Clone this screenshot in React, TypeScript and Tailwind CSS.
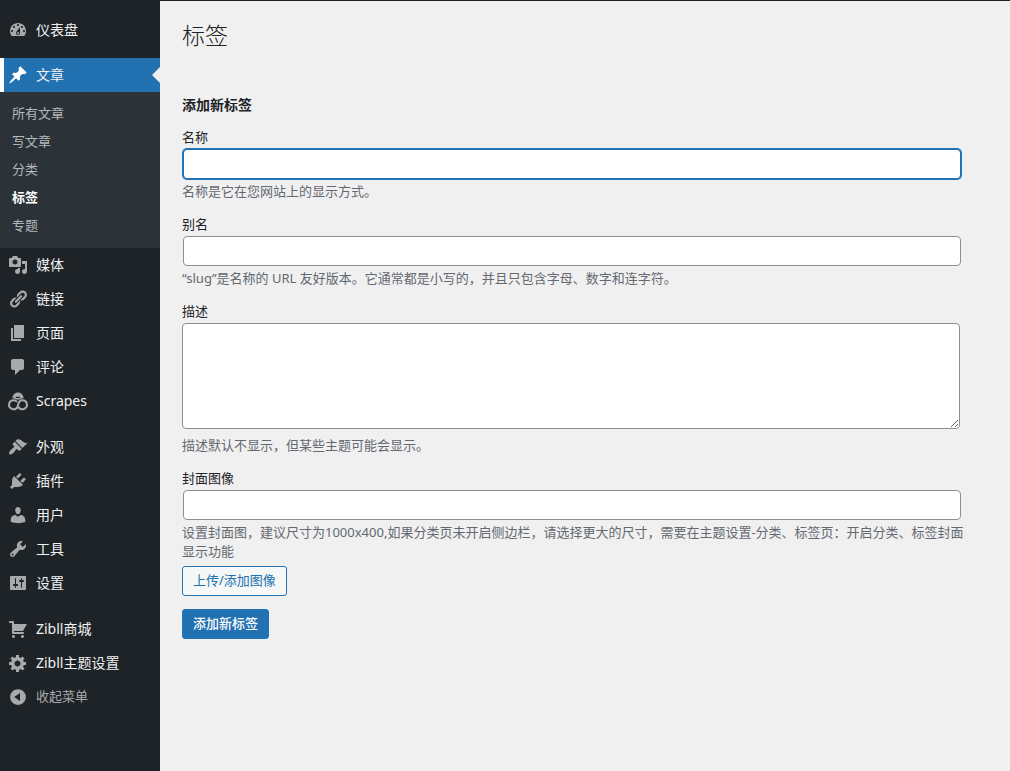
import { Fragment } from 'react';
import type { ReactNode } from 'react';
import clsx from 'clsx';

interface MenuItem {
  label: string;
  icon: string;
  current?: boolean;
  children?: { label: string; current?: boolean }[];
}

// Dashicons, 20 × 20 grid
const ICONS: Record<string, string> = {
  dashboard: 'M3.76 16h12.48c1.1-1.37 1.76-3.11 1.76-5 0-4.42-3.58-8-8-8s-8 3.58-8 8c0 1.89.66 3.63 1.76 5zM10 4c.55 0 1 .45 1 1s-.45 1-1 1-1-.45-1-1 .45-1 1-1zM6 6c.55 0 1 .45 1 1s-.45 1-1 1-1-.45-1-1 .45-1 1-1zm8 0c.55 0 1 .45 1 1s-.45 1-1 1-1-.45-1-1 .45-1 1-1zm-5.37 5.55L12 7v6c0 1.1-.9 2-2 2s-2-.9-2-2c0-.57.24-1.08.63-1.45zM4 10c.55 0 1 .45 1 1s-.45 1-1 1-1-.45-1-1 .45-1 1-1zm12 0c.55 0 1 .45 1 1s-.45 1-1 1-1-.45-1-1 .45-1 1-1zm-5 3c0-.55-.45-1-1-1s-1 .45-1 1 .45 1 1 1 1-.45 1-1z',
  post: 'M10.44 3.02l1.82-1.82 6.36 6.35-1.83 1.82c-1.05-.68-2.48-.57-3.41.36l-.75.75c-.92.93-1.04 2.35-.35 3.41l-1.83 1.82-2.41-2.41-2.8 2.79c-.42.42-3.38 2.71-3.8 2.29s1.86-3.39 2.28-3.81l2.79-2.79L4.1 9.36l1.83-1.82c1.05.69 2.48.57 3.4-.36l.75-.75c.93-.92 1.05-2.35.36-3.41z',
  media: 'M13 11V4c0-.55-.45-1-1-1h-1.67L9 1H5L3.67 3H2c-.55 0-1 .45-1 1v7c0 .55.45 1 1 1h10c.55 0 1-.45 1-1zM7 4.5c1.38 0 2.5 1.12 2.5 2.5S8.38 9.5 7 9.5 4.5 8.38 4.5 7 5.62 4.5 7 4.5zM14 6h5v10.5c0 1.38-1.12 2.5-2.5 2.5S14 17.88 14 16.5s1.12-2.5 2.5-2.5c.17 0 .34.02.5.05V9h-3V6zm-4 8.05V13h2v3.5c0 1.38-1.12 2.5-2.5 2.5S7 17.88 7 16.5 8.12 14 9.5 14c.17 0 .34.02.5.05z',
  links: 'M17.74 2.76c1.68 1.69 1.68 4.41 0 6.1l-1.53 1.52c-1.12 1.12-2.7 1.47-4.14 1.09l2.62-2.61.76-.77.76-.76c.84-.84.84-2.2 0-3.04-.84-.85-2.2-.85-3.04 0l-.77.76-3.38 3.38c-.37-1.44-.02-3.02 1.1-4.14l1.52-1.53c1.69-1.68 4.42-1.68 6.1 0zM8.59 13.43l5.34-5.34c.42-.42.42-1.1 0-1.52-.44-.43-1.13-.39-1.53 0l-5.33 5.34c-.42.42-.42 1.1 0 1.52.44.43 1.13.39 1.52 0zm-.76 2.29l4.14-4.15c.38 1.44.03 3.02-1.09 4.14l-1.52 1.53c-1.69 1.68-4.41 1.68-6.1 0-1.68-1.68-1.68-4.42 0-6.1l1.53-1.52c1.12-1.12 2.7-1.47 4.14-1.1l-4.14 4.15c-.85.84-.85 2.2 0 3.05.84.84 2.2.84 3.04 0z',
  page: 'M6 15V2h10v13H6zm-1 1h8v2H3V5h2v11z',
  comments: 'M5 2h9c1.1 0 2 .9 2 2v7c0 1.1-.9 2-2 2h-2l-5 5v-5H5c-1.1 0-2-.9-2-2V4c0-1.1.9-2 2-2z',
  appearance: 'M14.48 11.06L7.41 3.99l1.5-1.5c.5-.56 2.3-.47 3.51.32 1.21.8 1.43 1.28 2.91 2.1 1.18.64 2.45 1.26 4.45.85zm-.71.71L6.7 4.7 4.93 6.47c-.39.39-.39 1.02 0 1.41l1.06 1.06c.39.39.39 1.03 0 1.42-.6.6-1.43 1.11-2.21 1.69-.35.26-.7.53-1.01.84C1.43 14.23.4 16.08 1.4 17.07c.99 1 2.84-.03 4.18-1.36.31-.31.58-.66.85-1.02.57-.78 1.08-1.61 1.69-2.21.39-.39 1.02-.39 1.41 0l1.06 1.06c.39.39 1.02.39 1.41 0z',
  plugins: 'M13.11 4.36L9.87 7.6 8 5.73l3.24-3.24c.35-.34 1.05-.2 1.56.32.52.51.66 1.21.31 1.55zm-8 1.77l.91-1.12 9.01 9.01-1.19.84c-.71.71-2.63 1.16-3.82 1.16H6.14L4.9 17.26c-.59.59-1.54.59-2.12 0-.59-.58-.59-1.53 0-2.12l1.24-1.24v-3.88c0-1.13.4-3.19 1.09-3.89zm7.26 3.97l3.24-3.24c.34-.35 1.04-.21 1.55.31.52.51.66 1.21.31 1.55l-3.24 3.25z',
  users: 'M10 9.25c-2.27 0-2.73-3.44-2.73-3.44C7 4.02 7.82 2 9.97 2c2.16 0 2.98 2.02 2.71 3.81 0 0-.41 3.44-2.68 3.44zm0 2.57L12.72 10c2.39 0 4.52 2.33 4.52 4.53v2.49s-3.65 1.13-7.24 1.13c-3.65 0-7.24-1.13-7.24-1.13v-2.49c0-2.25 1.94-4.48 4.47-4.48z',
  tools: 'M16.68 9.77c-1.34 1.34-3.3 1.67-4.95.99l-5.41 6.52c-.99.99-2.59.99-3.58 0s-.99-2.59 0-3.57l6.52-5.42c-.68-1.65-.35-3.61.99-4.95 1.28-1.28 3.12-1.62 4.72-1.06l-2.89 2.89 2.82 2.82 2.86-2.87c.53 1.58.18 3.39-1.08 4.65zM3.81 16.21c.4.39 1.04.39 1.43 0 .4-.4.4-1.04 0-1.43-.39-.4-1.03-.4-1.43 0-.39.39-.39 1.03 0 1.43z',
  settings: 'M18 16V4c0-.55-.45-1-1-1H3c-.55 0-1 .45-1 1v12c0 .55.45 1 1 1h14c.55 0 1-.45 1-1zM8 11h1c.55 0 1 .45 1 1s-.45 1-1 1H8v1.5c0 .28-.22.5-.5.5s-.5-.22-.5-.5V13H6c-.55 0-1-.45-1-1s.45-1 1-1h1V5.5c0-.28.22-.5.5-.5s.5.22.5.5V11zm5-2h-1c-.55 0-1-.45-1-1s.45-1 1-1h1V5.5c0-.28.22-.5.5-.5s.5.22.5.5V7h1c.55 0 1 .45 1 1s-.45 1-1 1h-1v5.5c0 .28-.22.5-.5.5s-.5-.22-.5-.5V9z',
  cart: 'M6 13h9c.55 0 1 .45 1 1s-.45 1-1 1H5c-.55 0-1-.45-1-1V4H2c-.55 0-1-.45-1-1s.45-1 1-1h3c.55 0 1 .45 1 1v2h13l-4 7H6v1zm-.5 3c.83 0 1.5.67 1.5 1.5S6.33 19 5.5 19 4 18.33 4 17.5 4.67 16 5.5 16zm9 0c.83 0 1.5.67 1.5 1.5s-.67 1.5-1.5 1.5-1.5-.67-1.5-1.5.67-1.5 1.5-1.5z',
  generic: 'M18 12h-2.18c-.17.7-.44 1.35-.81 1.93l1.54 1.54-2.1 2.1-1.54-1.54c-.58.36-1.23.63-1.91.79V19H8v-2.18c-.68-.16-1.33-.43-1.91-.79l-1.54 1.54-2.12-2.12 1.54-1.54c-.36-.58-.63-1.23-.79-1.91H1V9.03h2.17c.16-.7.44-1.35.8-1.94L2.43 5.55l2.1-2.1 1.54 1.54c.58-.37 1.24-.64 1.93-.81V2h3v2.18c.68.16 1.33.43 1.91.79l1.54-1.54 2.12 2.12-1.54 1.54c.36.59.64 1.24.8 1.94H18V12zm-8.5 1.5c1.66 0 3-1.34 3-3s-1.34-3-3-3-3 1.34-3 3 1.34 3 3 3z',
  collapse: 'M10 2.16c4.33 0 7.84 3.51 7.84 7.84s-3.51 7.84-7.84 7.84S2.16 14.33 2.16 10 5.71 2.16 10 2.16zm2 11.72V6.12L6.18 9.97z',
};

// Groups are divided by a blank separator
const MENU: MenuItem[][] = [
  [{ label: '仪表盘', icon: 'dashboard' }],
  [
    {
      label: '文章',
      icon: 'post',
      current: true,
      children: [
        { label: '所有文章' },
        { label: '写文章' },
        { label: '分类' },
        { label: '标签', current: true },
        { label: '专题' },
      ],
    },
    { label: '媒体', icon: 'media' },
    { label: '链接', icon: 'links' },
    { label: '页面', icon: 'page' },
    { label: '评论', icon: 'comments' },
    { label: 'Scrapes', icon: 'scrapes' },
  ],
  [
    { label: '外观', icon: 'appearance' },
    { label: '插件', icon: 'plugins' },
    { label: '用户', icon: 'users' },
    { label: '工具', icon: 'tools' },
    { label: '设置', icon: 'settings' },
  ],
  [
    { label: 'Zibll商城', icon: 'cart' },
    { label: 'Zibll主题设置', icon: 'generic' },
  ],
];

function Icon({ name }: { name: string }) {
  if (name === 'scrapes') {
    return (
      <svg viewBox="0 0 20 20" className="size-5 shrink-0" fill="none" stroke="currentColor" strokeWidth="2" aria-hidden="true">
        <path d="M9 11C8.2 9.8 7 9.2 5.6 9.2a4.5 4.5 0 1 0 4 6.5l.9-3.4c.7-2 2.1-3.1 3.9-3.1a4.5 4.5 0 1 1-4 6.5" />
        <path d="M4.4 7.2C4.6 3.6 7 1.4 10 1.4s5.4 2.2 5.6 5.8c-1.4 0-2.6.4-3.6 1.2H8c-1-.8-2.2-1.2-3.6-1.2z" fill="currentColor" stroke="none" />
        <path d="M7.8 6.4h4.4" stroke="#1d2327" strokeWidth="1.2" />
      </svg>
    );
  }
  return (
    <svg viewBox="0 0 20 20" className="size-5 shrink-0" fill="currentColor" aria-hidden="true">
      <path d={ICONS[name]} />
    </svg>
  );
}

function MenuRow({ item }: { item: MenuItem }) {
  return (
    <li>
      <a
        href="#"
        aria-current={item.current ? 'true' : undefined}
        className={clsx(
          'relative flex h-[34px] items-center gap-2 text-sm text-[#f0f0f1]',
          item.current ? 'border-l-4 border-white bg-[#2271b1] pl-1' : 'pl-2',
        )}
      >
        <span className={item.current ? 'text-white' : 'text-[#a7aaad]'}>
          <Icon name={item.icon} />
        </span>
        {item.label}
        {/* Notch that points at the open page */}
        {item.current && (
          <span className="absolute top-1/2 right-0 -translate-y-1/2 border-8 border-l-0 border-transparent border-r-[#f0f0f0]" />
        )}
      </a>
      {item.children && (
        <ul className="bg-[#2c3338] pt-[7px] pb-[9px]">
          {item.children.map((child) => (
            <li key={child.label}>
              <a
                href="#"
                className={clsx(
                  'block px-3 text-[13px] leading-7',
                  child.current ? 'font-bold text-white' : 'text-[#b5b8bb]',
                )}
              >
                {child.label}
              </a>
            </li>
          ))}
        </ul>
      )}
    </li>
  );
}

function Sidebar() {
  return (
    <nav aria-label="主菜单" className="w-40 shrink-0 bg-[#1d2327] pt-[13px]">
      <ul>
        {MENU.map((group, i) => (
          <Fragment key={i}>
            {i > 0 && <li aria-hidden="true" className={i === 1 ? 'h-[11px]' : 'h-3'} />}
            {group.map((item) => (
              <MenuRow key={item.label} item={item} />
            ))}
          </Fragment>
        ))}
      </ul>
      <button type="button" className="flex h-[34px] w-full items-center gap-2 pl-2 text-[13px] text-[#a7aaad]">
        <Icon name="collapse" />
        收起菜单
      </button>
    </nav>
  );
}

function Field({ id, label, help, children }: { id: string; label: string; help: string; children: ReactNode }) {
  return (
    <div className="flex flex-col">
      <label htmlFor={id} className="self-start leading-5">{label}</label>
      {children}
      <p id={`${id}-help`} className="-mr-1 leading-[19px] text-[#646970]">{help}</p>
    </div>
  );
}

const inputClass = 'mx-px mt-0.5 mb-[3px] h-[30px] rounded border bg-white px-2 outline-none';

export default function App() {
  return (
    <div className="flex min-h-screen bg-[#f0f0f0] font-['Noto_Sans','Noto_Sans_CJK_SC',sans-serif] text-[13px] text-[#1d2327]">
      <Sidebar />
      <main className="min-w-0 flex-1 border-t border-[#1d2327] pt-[18px] pr-12 pb-16 pl-[22px]">
        <h1 className="text-[23px] leading-8 font-light">标签</h1>

        <form className="mt-11" onSubmit={(e) => e.preventDefault()}>
          <h2 className="text-sm leading-5 font-bold">添加新标签</h2>

          <div className="mt-3 flex flex-col gap-[13px]">
            <Field id="tag-name" label="名称" help="名称是它在您网站上的显示方式。">
              <input
                id="tag-name"
                type="text"
                aria-describedby="tag-name-help"
                className={clsx(inputClass, 'border-[#2271b1] ring-1 ring-[#2271b1]')}
              />
            </Field>
            <Field
              id="tag-slug"
              label="别名"
              help="“slug”是名称的 URL 友好版本。它通常都是小写的，并且只包含字母、数字和连字符。"
            >
              <input
                id="tag-slug"
                type="text"
                aria-describedby="tag-slug-help"
                className={clsx(inputClass, 'border-[#8c8f94]')}
              />
            </Field>
            <Field id="tag-description" label="描述" help="描述默认不显示，但某些主题可能会显示。">
              <textarea
                id="tag-description"
                aria-describedby="tag-description-help"
                className="mt-0.5 mr-0.5 mb-[7px] h-[106px] rounded border border-[#8c8f94] bg-white px-2 py-0.5 outline-none"
              />
            </Field>
            <Field
              id="tag-cover"
              label="封面图像"
              help="设置封面图，建议尺寸为1000x400,如果分类页未开启侧边栏，请选择更大的尺寸，需要在主题设置-分类、标签页：开启分类、标签封面显示功能"
            >
              <input
                id="tag-cover"
                type="text"
                aria-describedby="tag-cover-help"
                className={clsx(inputClass, 'border-[#8c8f94]')}
              />
            </Field>
          </div>

          <div className="mt-[5px] flex flex-col items-start gap-[13px]">
            <button type="button" className="h-[30px] rounded-[3px] border border-[#2271b1] bg-[#f6f7f7] px-2.5 text-[#2271b1]">
              上传/添加图像
            </button>
            <button type="submit" className="h-[30px] rounded-[3px] border border-[#2271b1] bg-[#2271b1] px-2.5 font-medium text-white">
              添加新标签
            </button>
          </div>
        </form>
      </main>
    </div>
  );
}
